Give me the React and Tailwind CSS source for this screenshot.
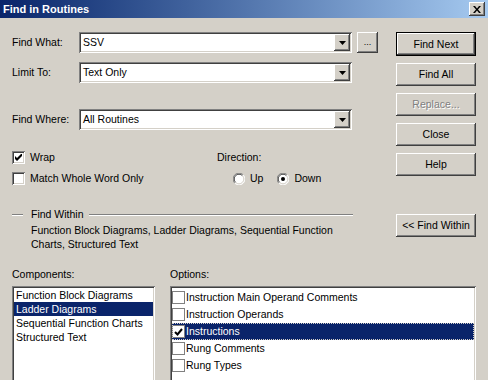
import React from 'react';

const raised = "shadow-[inset_-1px_-1px_#404040,inset_1px_1px_#ffffff,inset_-2px_-2px_#808080,inset_2px_2px_#d4d0c8]";
const sunken = "shadow-[inset_1px_1px_#808080,inset_-1px_-1px_#ffffff,inset_2px_2px_#404040,inset_-2px_-2px_#d4d0c8]";

const Arrow = () => (
    <svg width="7" height="4" viewBox="0 0 7 4">
        <path d="M0 0h7L3.5 4z" fill="#000" />
    </svg>
);

const Combo = ({ value }) => (
    <div className={`flex items-stretch w-[273px] h-[21px] bg-white p-[2px] ${sunken}`}>
        <div className="flex-1 flex items-center pl-[2px]">{value}</div>
        <div className={`w-[16px] flex items-center justify-center bg-[#d4d0c8] ${raised}`}>
            <Arrow />
        </div>
    </div>
);

const Button = ({ children, isDefault, disabled }) => {
    if (isDefault) {
        return (
            <div className="w-[80px] h-[24px] border border-black flex">
                <div className={`flex-1 flex items-center justify-center ${raised}`}>{children}</div>
            </div>
        );
    }
    return (
        <div
            className={`w-[80px] h-[23px] flex items-center justify-center ${raised} ${
                disabled ? "text-[#808080] [text-shadow:1px_1px_#ffffff]" : ""
            }`}
        >
            {children}
        </div>
    );
};

const Check = ({ checked }) => (
    <div className={`w-[13px] h-[13px] bg-white flex items-center justify-center ${sunken}`}>
        {checked && (
            <svg width="7" height="7" viewBox="0 0 7 7">
                <path d="M0 2v3l2 2 5-5V-1L2 4z" fill="#000" />
            </svg>
        )}
    </div>
);

const Radio = ({ checked }) => (
    <svg width="12" height="12" viewBox="0 0 12 12">
        <circle cx="6" cy="6" r="5.5" fill="#ffffff" />
        <path d="M1.8 10.2A5.5 5.5 0 0 1 10.2 1.8" stroke="#808080" strokeWidth="1" fill="none" />
        <path d="M2.6 9.4A4.5 4.5 0 0 1 9.4 2.6" stroke="#404040" strokeWidth="1" fill="none" />
        <path d="M10.2 1.8A5.5 5.5 0 0 1 1.8 10.2" stroke="#ffffff" strokeWidth="1" fill="none" />
        <path d="M9.4 2.6A4.5 4.5 0 0 1 2.6 9.4" stroke="#d4d0c8" strokeWidth="1" fill="none" />
        {checked && <circle cx="6" cy="6" r="2" fill="#000" />}
    </svg>
);

const ListCheck = ({ checked }) => (
    <div className="w-[13px] h-[13px] bg-white border border-[#808080] flex items-center justify-center">
        {checked && (
            <svg width="9" height="8" viewBox="0 0 9 8">
                <path d="M1 4l2.5 2.5L8 1" stroke="#000" strokeWidth="2" fill="none" />
            </svg>
        )}
    </div>
);

const components = ["Function Block Diagrams", "Ladder Diagrams", "Sequential Function Charts", "Structured Text"];
const options = [
    { label: "Instruction Main Operand Comments", checked: false },
    { label: "Instruction Operands", checked: false },
    { label: "Instructions", checked: true, selected: true },
    { label: "Rung Comments", checked: false },
    { label: "Rung Types", checked: false },
];

const App = () => {
    return (
        <div className="w-[488px] h-[380px] overflow-hidden bg-[#d4d0c8] text-black text-[10.5px] leading-[13px] font-['Liberation_Sans',Arial,sans-serif]">
            {/* title bar */}
            <div className="h-[18px] flex items-center justify-between pl-[3px] pr-[3px] bg-gradient-to-r from-[#0a246a] to-[#a6caf0]">
                <span className="text-white font-bold text-[11px]">Find in Routines</span>
                <div className={`w-[16px] h-[14px] bg-[#d4d0c8] flex items-center justify-center ${raised}`}>
                    <svg width="8" height="7" viewBox="0 0 8 7">
                        <path d="M0 0h2l2 2.5L6 0h2L5 3.5 8 7H6L4 4.5 2 7H0l3-3.5z" fill="#000" />
                    </svg>
                </div>
            </div>

            <div className="h-[250px] flex">
                <div className="w-[396px] pl-[12px]">
                    <div className="mt-[14px] flex items-center">
                        <span className="w-[67px]">Find What:</span>
                        <Combo value="SSV" />
                        <div className={`ml-[5px] w-[21px] h-[21px] flex items-center justify-center text-[9px] ${raised}`}>...</div>
                    </div>
                    <div className="mt-[9px] flex items-center">
                        <span className="w-[67px]">Limit To:</span>
                        <Combo value="Text Only" />
                    </div>
                    <div className="mt-[26px] flex items-center">
                        <span className="w-[67px]">Find Where:</span>
                        <Combo value="All Routines" />
                    </div>

                    <div className="mt-[21px] grid grid-cols-[205px_1fr] gap-y-[8px]">
                        <div className="flex items-center gap-[5px]">
                            <Check checked />
                            <span>Wrap</span>
                        </div>
                        <div className="flex items-center">Direction:</div>
                        <div className="flex items-center gap-[5px]">
                            <Check />
                            <span>Match Whole Word Only</span>
                        </div>
                        <div className="flex items-center pl-[16px]">
                            <Radio />
                            <span className="ml-[5px]">Up</span>
                            <span className="ml-[14px] flex"><Radio checked /></span>
                            <span className="ml-[5px]">Down</span>
                        </div>
                    </div>

                    <div className="mt-[23px] w-[341px] flex items-center">
                        <div className="w-[11px] h-[2px] border-t border-[#808080] border-b border-b-white" />
                        <span className="ml-[8px] mr-[5px]">Find Within</span>
                        <div className="flex-1 h-[2px] border-t border-[#808080] border-b border-b-white" />
                    </div>
                    <div className="mt-[2px] pl-[19px] leading-[14px]">
                        Function Block Diagrams, Ladder Diagrams, Sequential Function
                        <br />
                        Charts, Structured Text
                    </div>
                </div>

                <div className="flex flex-col gap-[7px] pt-[14px]">
                    <Button isDefault>Find Next</Button>
                    <Button>Find All</Button>
                    <Button disabled>Replace...</Button>
                    <Button>Close</Button>
                    <Button>Help</Button>
                    <div className="mt-[31px]">
                        <Button>&lt;&lt; Find Within</Button>
                    </div>
                </div>
            </div>

            <div className="flex pl-[12px]">
                <div className="w-[143px]">
                    <div>Components:</div>
                    <div className={`mt-[5px] h-[110px] bg-white p-[2px] ${sunken}`}>
                        {components.map((c) => (
                            <div
                                key={c}
                                className={`h-[14px] flex items-center pl-[2px] ${
                                    c === "Ladder Diagrams" ? "bg-[#0a246a] text-white" : ""
                                }`}
                            >
                                {c}
                            </div>
                        ))}
                    </div>
                </div>
                <div className="ml-[15px] w-[306px]">
                    <div>Options:</div>
                    <div className={`mt-[5px] h-[110px] bg-white p-[2px] ${sunken}`}>
                        <div className="pt-[1px]">
                            {options.map((o) => (
                                <div
                                    key={o.label}
                                    className={`h-[17px] flex items-center ${
                                        o.selected
                                            ? "bg-[#0a246a] text-white outline outline-1 outline-dotted outline-[#d4d0c8] -outline-offset-1"
                                            : ""
                                    }`}
                                >
                                    <ListCheck checked={o.checked} />
                                    <span className="ml-[1px]">{o.label}</span>
                                </div>
                            ))}
                        </div>
                    </div>
                </div>
            </div>
        </div>
    );
};

export default App;
